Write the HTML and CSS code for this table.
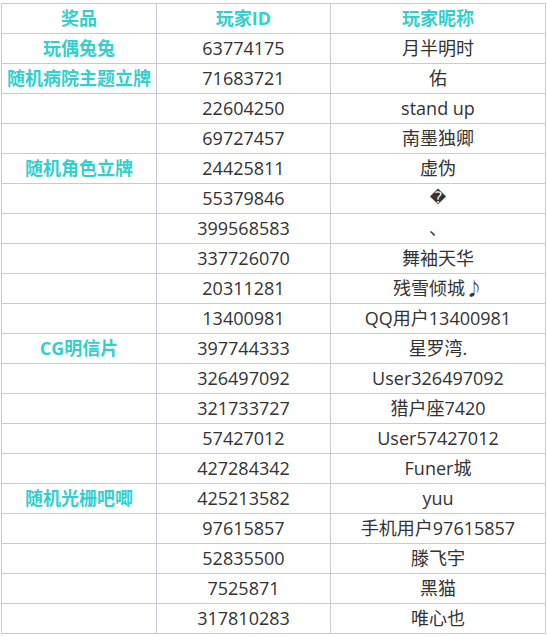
FILE: index.html
```html
<!DOCTYPE html>
<html lang="zh-CN">
<head>
<meta charset="utf-8">
<link rel="stylesheet" href="styles.css">
</head>
<body>
<div class="table">
  <div class="cell head">奖品</div><div class="cell head">玩家ID</div><div class="cell head">玩家昵称</div>
  <div class="cell prize">玩偶兔兔</div><div class="cell">63774175</div><div class="cell">月半明时</div>
  <div class="cell prize">随机病院主题立牌</div><div class="cell">71683721</div><div class="cell">佑</div>
  <div class="cell prize"></div><div class="cell">22604250</div><div class="cell">stand up</div>
  <div class="cell prize"></div><div class="cell">69727457</div><div class="cell">南墨独卿</div>
  <div class="cell prize">随机角色立牌</div><div class="cell">24425811</div><div class="cell">虚伪</div>
  <div class="cell prize"></div><div class="cell">55379846</div><div class="cell repl">&#xFFFD;</div>
  <div class="cell prize"></div><div class="cell">399568583</div><div class="cell">、</div>
  <div class="cell prize"></div><div class="cell">337726070</div><div class="cell">舞袖天华</div>
  <div class="cell prize"></div><div class="cell">20311281</div><div class="cell">残雪倾城♪</div>
  <div class="cell prize"></div><div class="cell">13400981</div><div class="cell">QQ用户13400981</div>
  <div class="cell prize">CG明信片</div><div class="cell">397744333</div><div class="cell">星罗湾.</div>
  <div class="cell prize"></div><div class="cell">326497092</div><div class="cell">User326497092</div>
  <div class="cell prize"></div><div class="cell">321733727</div><div class="cell">猎户座7420</div>
  <div class="cell prize"></div><div class="cell">57427012</div><div class="cell">User57427012</div>
  <div class="cell prize"></div><div class="cell">427284342</div><div class="cell">Funer城</div>
  <div class="cell prize">随机光栅吧唧</div><div class="cell">425213582</div><div class="cell">yuu</div>
  <div class="cell prize"></div><div class="cell">97615857</div><div class="cell">手机用户97615857</div>
  <div class="cell prize"></div><div class="cell">52835500</div><div class="cell">滕飞宇</div>
  <div class="cell prize"></div><div class="cell">7525871</div><div class="cell">黑猫</div>
  <div class="cell prize"></div><div class="cell">317810283</div><div class="cell">唯心也</div>
</div>
</body>
</html>
```
FILE: styles.css
```css
html, body {
  margin: 0;
  padding: 0;
  background: #ffffff;
}
body {
  font-family: "Open Sans", "Noto Sans CJK SC", "DejaVu Sans", sans-serif;
  font-size: 18px;
  color: #333333;
}
.table {
  display: grid;
  grid-template-columns: 154px 173px 214px;
  grid-auto-rows: 29px;
  gap: 1px;
  padding: 1px;
  background: #c8cad8;
  width: fit-content;
  margin: 3px 0 0 1px;
}
.cell {
  background: #ffffff;
  display: flex;
  align-items: center;
  justify-content: center;
  white-space: nowrap;
  line-height: 1;
  padding-bottom: 2px;
  box-sizing: border-box;
}
.head, .prize {
  color: #33cfcf;
  font-weight: bold;
}
.repl {
  font-family: "DejaVu Sans", sans-serif;
  font-size: 16px;
}
```
